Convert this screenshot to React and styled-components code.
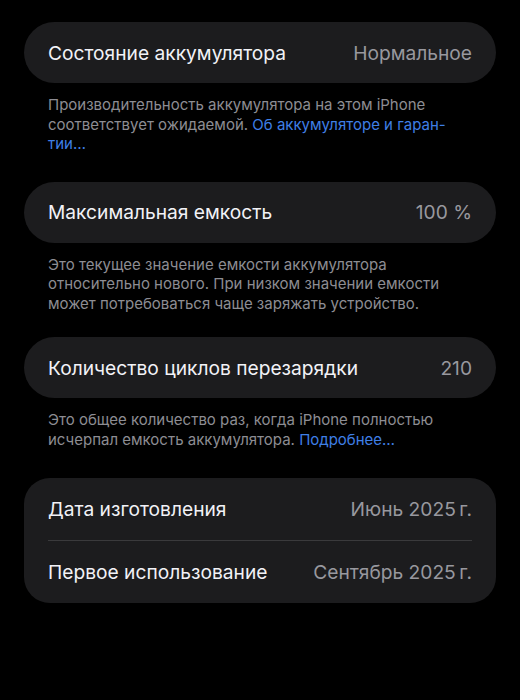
import React from 'react'
import styled, { createGlobalStyle } from 'styled-components'

const Global = createGlobalStyle`
  html, body {
    margin: 0;
    padding: 0;
    background: #000;
  }
  body {
    font-family: Inter, "Noto Sans", "Liberation Sans", sans-serif;
    -webkit-font-smoothing: antialiased;
  }
`

const Page = styled.div`
  width: 520px;
  min-height: 700px;
  box-sizing: border-box;
  padding: 22px 24px 0;
  background: #000;
`

const Section = styled.section`
  margin-bottom: ${p => p.gap || 28}px;
`

const Card = styled.div`
  background: #1c1c1e;
  border-radius: ${p => (p.tall ? 26 : 31)}px;
  padding: 0 24px;
`

const Row = styled.div`
  height: ${p => p.h || 61}px;
  display: flex;
  align-items: center;
  justify-content: space-between;
  font-size: 19.2px;
  letter-spacing: 0;
  & + & {
    border-top: 1px solid #3a3a3c;
  }
`

const Label = styled.span`
  color: #f2f2f7;
`

const Value = styled.span`
  color: #98989e;
`

const Note = styled.p`
  margin: 0;
  padding: 12px 24px 0;
  font-size: 15px;
  line-height: 19.5px;
  color: #8d8d93;
`

const Link = styled.span`
  color: #3f7fe6;
`

export default function App() {
  return (
    <Page>
      <Global />
      <Section gap={28}>
        <Card>
          <Row>
            <Label>Состояние аккумулятора</Label>
            <Value>Нормальное</Value>
          </Row>
        </Card>
        <Note>
          Производительность аккумулятора на этом iPhone
          <br />
          соответствует ожидаемой. <Link>Об аккумуляторе и гаран-<br />тии…</Link>
        </Note>
      </Section>

      <Section gap={24}>
        <Card>
          <Row>
            <Label>Максимальная емкость</Label>
            <Value>100 %</Value>
          </Row>
        </Card>
        <Note>
          Это текущее значение емкости аккумулятора
          <br />
          относительно нового. При низком значении емкости
          <br />
          может потребоваться чаще заряжать устройство.
        </Note>
      </Section>

      <Section gap={29}>
        <Card>
          <Row>
            <Label>Количество циклов перезарядки</Label>
            <Value>210</Value>
          </Row>
        </Card>
        <Note>
          Это общее количество раз, когда iPhone полностью
          <br />
          исчерпал емкость аккумулятора. <Link>Подробнее…</Link>
        </Note>
      </Section>

      <Section>
        <Card tall>
          <Row h={62}>
            <Label>Дата изготовления</Label>
            <Value>Июнь 2025{'\u2009'}г.</Value>
          </Row>
          <Row h={62}>
            <Label>Первое использование</Label>
            <Value>Сентябрь 2025{'\u2009'}г.</Value>
          </Row>
        </Card>
      </Section>
    </Page>
  )
}
